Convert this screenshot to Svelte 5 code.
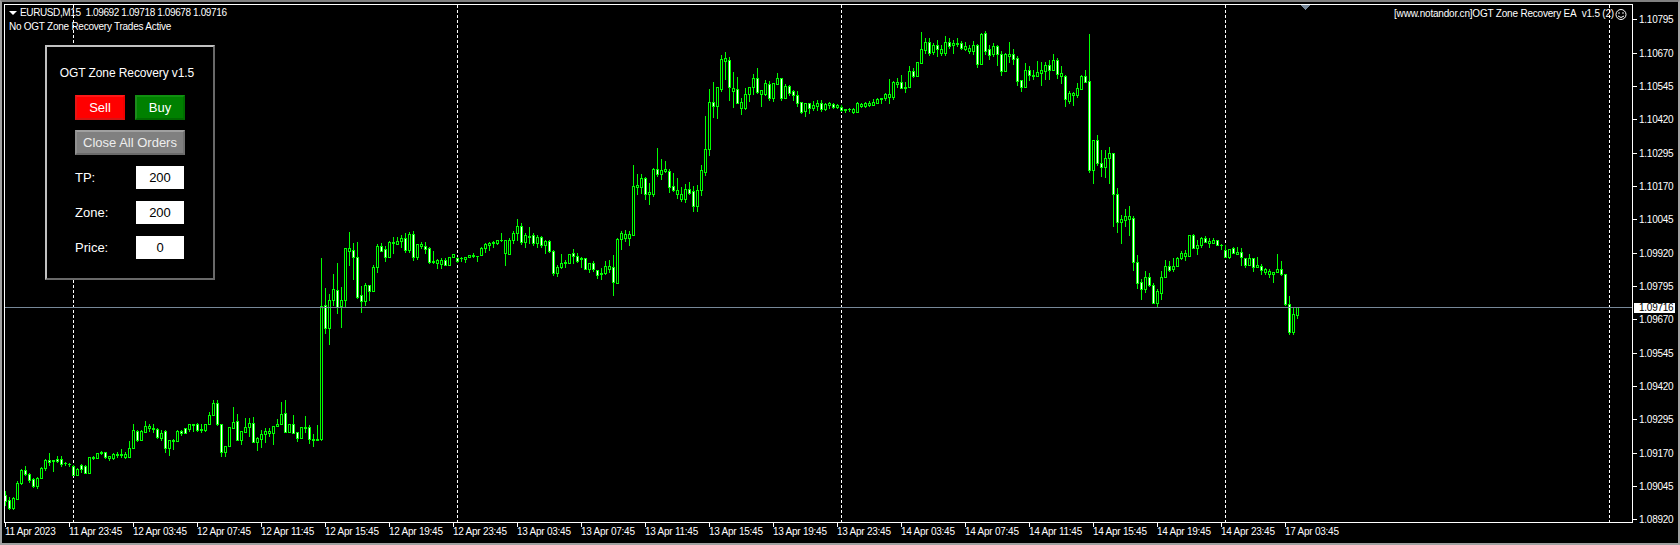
<script>
    // [high, body top, body bottom, low, bear] in page pixels, one bar every 4px from x = 5
    const bars = [
        [491,495,501,505,1],[497,500,508,509,1],[497,498,508,509,0],[481,483,499,499,0],[469,470,483,484,0],[466,470,474,475,1],[473,474,480,482,1],[478,479,486,487,1],[477,478,486,488,0],[467,468,478,478,0],
        [459,460,468,470,0],[453,460,462,465,1],[460,460,461,471,0],[456,459,461,462,1],[456,459,464,466,1],[462,463,463,465,0],[463,464,464,466,0],[465,466,475,475,1],[468,469,475,475,0],[464,465,469,472,1],
        [465,466,473,473,1],[457,457,473,473,0],[456,457,458,459,0],[453,453,458,458,0],[451,452,453,454,0],[452,452,457,458,1],[456,456,458,460,0],[453,454,458,459,0],[452,454,455,457,0],[449,454,455,457,0],
        [452,454,457,458,0],[441,448,457,457,0],[424,430,448,448,0],[430,431,440,441,1],[430,431,440,440,0],[421,426,432,432,0],[424,426,428,431,0],[424,428,429,432,0],[428,429,437,438,1],[430,433,438,440,0],
        [430,431,448,452,1],[440,440,448,455,0],[439,440,441,449,0],[430,431,441,441,0],[430,431,433,435,1],[428,428,433,433,1],[424,424,429,431,0],[424,424,425,431,0],[423,424,430,431,1],[424,429,430,432,0],
        [424,424,430,431,0],[412,415,424,424,0],[400,403,415,415,0],[400,403,424,425,1],[424,424,452,456,1],[446,446,452,456,0],[427,427,446,446,0],[407,422,428,428,0],[414,421,440,440,1],[431,431,440,444,0],
        [418,427,432,432,0],[418,423,427,436,0],[417,423,442,442,1],[437,438,442,450,0],[430,434,439,447,0],[428,431,434,442,0],[428,431,433,436,0],[426,426,433,444,0],[419,424,426,426,0],[402,414,424,424,0],
        [400,413,432,432,1],[424,424,432,432,0],[415,424,433,433,1],[432,432,438,441,1],[427,427,438,438,0],[416,427,428,432,0],[425,427,439,443,1],[434,439,440,446,0],[425,439,440,440,0],[258,306,439,440,0],
        [288,305,328,333,1],[294,300,328,344,0],[274,289,300,305,0],[263,290,307,313,1],[287,300,306,327,0],[248,248,300,306,0],[232,248,251,265,0],[243,250,257,279,1],[242,257,297,298,1],[286,295,301,312,1],
        [283,285,301,305,0],[285,285,291,300,1],[265,267,291,291,0],[244,246,267,272,0],[243,246,251,251,1],[246,249,257,261,1],[241,242,257,257,0],[237,242,243,253,0],[237,241,244,244,0],[235,238,241,247,0],
        [233,238,250,252,1],[232,234,250,252,0],[231,234,257,260,1],[244,244,257,259,0],[242,244,246,248,0],[242,246,249,253,1],[247,248,262,263,1],[251,261,262,263,0],[259,260,263,268,0],[258,260,264,268,0],
        [258,260,265,265,1],[257,257,265,265,0],[254,254,257,257,0],[257,258,261,262,1],[257,258,258,261,0],[257,257,259,262,0],[255,255,257,257,0],[253,255,256,257,0],[256,256,256,261,0],[247,248,255,255,0],
        [243,244,248,252,0],[242,243,245,250,0],[241,242,243,247,0],[240,240,243,244,0],[233,240,240,241,0],[240,240,253,265,0],[238,240,254,254,0],[231,233,240,243,0],[219,226,233,240,0],[223,226,242,244,1],
        [233,235,242,247,0],[227,236,237,243,0],[233,235,243,245,1],[235,237,243,247,0],[236,237,245,247,1],[240,241,245,253,0],[240,241,251,252,1],[250,251,273,275,1],[265,267,273,276,0],[254,263,267,268,0],
        [260,262,263,267,0],[254,254,263,263,0],[249,253,256,263,1],[253,256,261,262,1],[257,258,259,267,0],[258,258,269,269,1],[263,263,269,272,0],[261,263,269,271,1],[270,270,275,278,1],[268,273,274,279,0],
        [261,266,273,274,0],[260,266,269,272,0],[255,267,282,295,1],[238,239,283,283,0],[231,233,239,249,0],[230,234,238,241,0],[231,234,238,245,0],[165,186,235,235,0],[174,185,187,194,0],[174,178,187,193,0],
        [177,178,194,199,1],[183,192,194,204,0],[168,169,194,196,0],[148,169,174,176,1],[159,170,174,179,0],[161,169,171,172,0],[169,171,187,192,1],[173,186,190,191,1],[178,190,194,198,0],[187,194,199,201,0],
        [184,189,199,202,0],[182,189,193,194,1],[186,191,206,211,1],[185,190,206,211,0],[165,170,190,195,0],[116,149,172,175,0],[89,102,149,155,0],[82,102,106,117,1],[87,87,106,118,0],[55,59,89,91,0],
        [52,58,61,79,0],[57,60,87,100,1],[72,88,91,107,0],[77,89,103,103,1],[98,102,108,114,0],[88,94,108,109,0],[87,87,94,101,0],[74,78,87,94,0],[68,78,92,93,1],[90,90,94,106,0],
        [80,83,94,95,0],[81,84,98,100,1],[83,83,98,101,0],[73,78,84,84,0],[78,78,98,100,1],[84,86,98,98,0],[85,86,93,95,1],[90,91,95,100,1],[91,95,103,106,1],[102,102,112,113,1],
        [103,103,111,116,0],[103,103,108,113,1],[101,105,108,110,0],[100,103,106,110,0],[100,103,109,111,1],[103,104,109,110,0],[102,103,105,108,0],[103,104,107,108,1],[104,105,107,108,0],[105,107,110,111,1],
        [109,109,110,112,0],[108,109,109,111,0],[108,109,112,113,0],[102,103,112,112,0],[103,104,106,107,0],[102,103,106,107,0],[101,103,105,106,0],[99,102,105,105,0],[98,99,103,103,0],[98,98,99,103,0],
        [93,94,98,100,0],[79,94,97,103,0],[81,82,97,99,0],[78,82,84,87,0],[75,82,88,88,1],[82,87,88,92,0],[66,71,87,87,0],[68,71,76,77,1],[62,62,76,76,0],[32,49,63,63,0],
        [38,42,50,53,0],[38,42,53,55,1],[43,45,52,54,0],[40,45,49,56,1],[45,49,53,55,0],[36,42,53,55,0],[38,42,46,48,1],[40,43,45,53,0],[38,43,44,46,0],[41,43,48,49,1],
        [42,46,49,50,0],[45,48,51,53,0],[41,45,51,54,0],[44,45,64,67,1],[33,34,64,64,0],[31,33,51,54,1],[45,49,55,59,1],[43,46,54,56,0],[45,46,54,65,1],[51,54,71,75,1],
        [53,54,71,71,0],[42,54,56,62,0],[49,54,59,64,1],[56,58,81,85,1],[80,80,87,91,1],[63,70,87,87,0],[66,70,75,80,1],[70,75,76,79,0],[61,72,76,76,0],[62,70,73,85,0],
        [62,65,71,79,0],[60,65,70,79,1],[54,60,70,70,0],[58,60,74,78,1],[66,73,76,83,0],[75,76,99,106,1],[91,93,101,103,0],[92,93,95,105,0],[83,88,95,97,0],[75,76,89,89,0],
        [70,76,82,82,1],[34,81,170,172,1],[140,140,170,183,0],[135,140,163,165,1],[150,163,167,176,1],[150,158,167,177,0],[147,153,158,183,0],[153,153,194,226,1],[188,194,222,232,1],[215,219,222,243,0],
        [209,216,220,226,0],[206,216,219,235,0],[216,218,262,270,1],[255,262,283,288,1],[279,282,289,299,1],[271,277,289,292,0],[273,277,285,286,1],[283,285,303,303,1],[289,291,303,306,0],[271,277,293,299,0],
        [260,266,277,277,0],[261,266,270,271,1],[258,266,269,271,0],[257,258,266,266,0],[251,253,258,259,0],[250,253,256,260,0],[235,235,256,256,0],[234,235,248,248,1],[240,245,248,254,0],[237,238,245,247,0],
        [236,238,242,242,1],[238,241,243,247,0],[238,240,243,243,0],[240,240,245,245,1],[244,245,245,249,0],[245,250,257,257,1],[249,249,257,258,0],[247,248,253,253,1],[247,252,254,254,0],[248,252,257,265,1],
        [258,258,265,267,1],[254,258,265,265,0],[258,258,267,271,1],[257,265,267,267,0],[264,266,270,274,1],[268,269,272,274,0],[269,271,274,277,0],[272,272,274,282,0],[254,269,272,272,0],[261,269,274,275,1],
        [274,274,304,305,1],[296,304,332,334,1],[307,314,332,334,0],[307,307,315,318,0]
    ]

    const prices = ['1.10795','1.10670','1.10545','1.10420','1.10295','1.10170','1.10045','1.09920','1.09795','1.09670','1.09545','1.09420','1.09295','1.09170','1.09045','1.08920']

    const times = ['11 Apr 2023','11 Apr 23:45']
    for (const day of ['12','13','14']) {
        for (const h of ['03:45','07:45','11:45','15:45','19:45','23:45']) {
            times.push(`${day} Apr ${h}`)
        }
    }
    times.push('17 Apr 03:45')

    // period separators
    const separators = [73, 457, 841, 1225, 1609]

    let tp = 200
    let zone = 200
    let price = 0
</script>

<div class="window">
    <div class="top">
        <div class="chart">
            <svg width="1627" height="517" shape-rendering="crispEdges">
                <g transform="translate(-5,-5)">
                    {#each separators as x}
                        <line class="sep" x1={x + 0.5} x2={x + 0.5} y1="5" y2="522" />
                    {/each}
                    {#each bars as [hi, top, bot, lo, bear], i}
                        <rect class="bar" x={5 + 4 * i} y={hi} width="1" height={lo - hi + 1} />
                        <rect class="bar" x={4 + 4 * i} y={top} width="3" height={bot - top + 1} />
                        {#if bot - top > 1}
                            <rect class={bear ? 'bear' : 'bull'} x={5 + 4 * i} y={top + 1} width="1" height={bot - top - 1} />
                        {/if}
                    {/each}
                    <rect class="last" x="5" y="307" width="1627" height="1" />
                    <polygon class="last" points="1300,5 1311,5 1305.5,10" />
                    <circle class="smile" cx="1621" cy="14.5" r="5" shape-rendering="auto" />
                    <circle class="eye" cx="1619" cy="13" r="0.8" shape-rendering="auto" />
                    <circle class="eye" cx="1623" cy="13" r="0.8" shape-rendering="auto" />
                    <path class="smile" d="M1618 16 Q1621 19 1624 16" shape-rendering="auto" />
                </g>
            </svg>

            <div class="legend">
                <div class="symbol"><span class="arrow"></span>EURUSD,M15&nbsp; 1.09692 1.09718 1.09678 1.09716</div>
                <div class="status">No OGT Zone Recovery Trades Active</div>
            </div>
            <div class="ea">[www.notandor.cn]OGT Zone Recovery EA&nbsp; v1.5 (2)</div>

            <div class="panel">
                <div class="title">OGT Zone Recovery v1.5</div>
                <div class="row">
                    <button class="sell">Sell</button>
                    <button class="buy">Buy</button>
                </div>
                <button class="close">Close All Orders</button>
                <div class="field">
                    <span>TP:</span>
                    <input bind:value={tp} />
                </div>
                <div class="field">
                    <span>Zone:</span>
                    <input bind:value={zone} />
                </div>
                <div class="field">
                    <span>Price:</span>
                    <input bind:value={price} />
                </div>
            </div>
        </div>

        <div class="prices">
            {#each prices as p}
                <div class="price"><i></i>{p}</div>
            {/each}
            <div class="current">1.09716</div>
        </div>
    </div>

    <div class="times">
        {#each times as t}
            <div class="time"><i></i>{t}</div>
        {/each}
    </div>
</div>

<style>
    :global(body) {
        background: #000;
    }

    .window {
        width: 1680px;
        height: 545px;
        box-sizing: border-box;
        border: 2px solid #a0a0a0;
        border-top-color: #808080;
        background: #000;
        color: #fff;
        font-family: "Liberation Sans", Arial, sans-serif;
        font-size: 10px;
        letter-spacing: -0.25px;
        overflow: hidden;
    }

    .top {
        display: flex;
        height: 521px;
        box-sizing: border-box;
        padding: 2px 0 0 2px;
    }

    .chart {
        position: relative;
        width: 1627px;
        height: 517px;
        border: 1px solid #fff;
        flex: none;
    }

    svg {
        display: block;
    }

    .bar {
        fill: #00ff00;
    }

    .bull {
        fill: #000;
    }

    .bear {
        fill: #fff;
    }

    .last {
        fill: #778899;
    }

    .sep {
        stroke: #fff;
        stroke-width: 1;
        stroke-dasharray: 3 2;
    }

    .smile {
        fill: none;
        stroke: #fff;
        stroke-width: 1;
    }

    .eye {
        fill: #fff;
    }

    .legend {
        position: absolute;
        left: 4px;
        top: 1px;
        line-height: 14px;
        white-space: nowrap;
    }

    .symbol {
        display: flex;
        align-items: center;
        letter-spacing: -0.38px;
    }

    .arrow {
        width: 0;
        height: 0;
        margin-right: 3px;
        border-left: 4px solid transparent;
        border-right: 4px solid transparent;
        border-top: 4px solid #fff;
    }

    .ea {
        position: absolute;
        right: 18px;
        top: 2px;
        line-height: 14px;
        letter-spacing: -0.2px;
        white-space: nowrap;
    }

    .panel {
        position: absolute;
        left: 40px;
        top: 40px;
        width: 170px;
        height: 235px;
        box-sizing: border-box;
        padding: 18px 28px 0;
        border: 2px solid;
        border-color: #c0c0c0 #696969 #696969 #c0c0c0;
        background: #000;
        display: flex;
        flex-direction: column;
        font-size: 13px;
        letter-spacing: 0;
    }

    .title {
        margin: 0 -16px 14px -22px;
        height: 16px;
        line-height: 16px;
        text-align: center;
        font-size: 12px;
        letter-spacing: -0.1px;
    }

    .row {
        display: flex;
        gap: 10px;
        margin-bottom: 10px;
    }

    button {
        height: 25px;
        padding: 0;
        box-sizing: border-box;
        border: 2px solid;
        color: #fff;
        font: inherit;
    }

    .sell,
    .buy {
        width: 50px;
    }

    .sell {
        background: #ff0000;
        border-color: #ff1818 #f00000 #d81414 #e81414;
    }

    .buy {
        background: #008000;
        border-color: #109010 #007000 #006800 #1c8a1c;
    }

    .close {
        width: 110px;
        margin-bottom: 11px;
        background: #808080;
        border-color: #a0a0a0 #707070 #6a6a6a #909090;
        color: #eee;
    }

    .field {
        display: flex;
        justify-content: space-between;
        align-items: center;
        height: 23px;
        margin-bottom: 12px;
        padding-right: 1px;
    }

    input {
        width: 48px;
        height: 23px;
        box-sizing: border-box;
        padding: 0;
        border: none;
        background: #fff;
        color: #000;
        text-align: center;
        font: inherit;
    }

    .prices {
        position: relative;
        margin-top: -1px;
        padding-top: 0.33px;
    }

    .price {
        display: flex;
        align-items: center;
        height: 33.33px;
    }

    .price i {
        display: block;
        width: 4px;
        height: 1px;
        margin-right: 2px;
        background: #fff;
    }

    .current {
        position: absolute;
        left: 1px;
        top: 300px;
        width: 41px;
        height: 10px;
        line-height: 10px;
        padding-left: 5px;
        box-sizing: border-box;
        background: #fff;
        color: #000;
    }

    .times {
        display: flex;
        padding-left: 3px;
    }

    .time {
        width: 64px;
        flex: none;
        white-space: nowrap;
        line-height: 12px;
    }

    .time i {
        display: block;
        width: 1px;
        height: 4px;
        margin-bottom: -1.5px;
        background: #fff;
    }
</style>
